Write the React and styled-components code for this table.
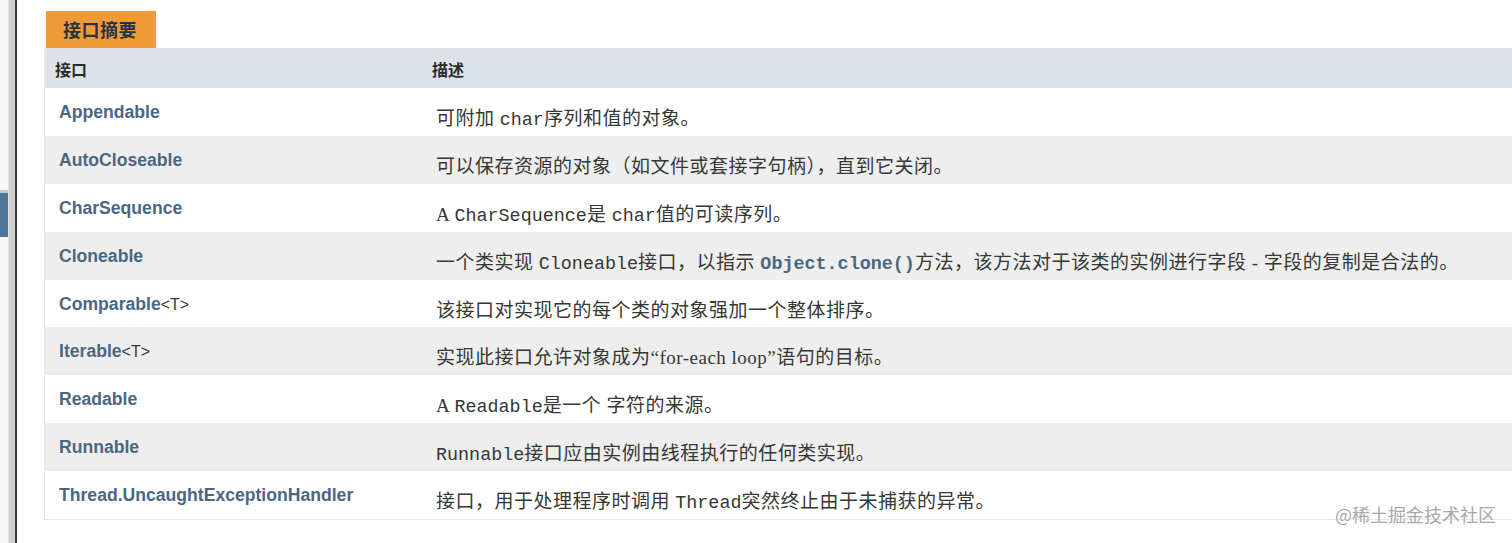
import React from "react";
import styled, { createGlobalStyle } from "styled-components";

const GlobalStyle = createGlobalStyle`
  html, body {
    margin: 0;
    padding: 0;
    background: #ffffff;
  }
  body {
    font-family: "Liberation Sans", Arial, "Noto Sans CJK SC", sans-serif;
    color: #353833;
  }
`;

const Page = styled.div`
  position: relative;
  display: flex;
  height: 543px;
  overflow: hidden;
  background: #fff;
`;

// the window edge on the left of the screenshot
const Edge = styled.div`
  display: flex;
  flex: none;
  width: 17px;
`;

const EdgeStrip = styled.div`
  width: 8px;
  padding-top: 190px;
  background: #f7f7f7;
`;

const BlueTab = styled.div`
  height: 44px;
  border-top: 3px solid #c9c9c9;
  background: #4e7699;
`;

const Gutter = styled.div`
  width: 6px;
  background: #cfcfcf;
  border-left: 1px solid #e2e2e2;
`;

const EdgeLine = styled.div`
  width: 2px;
  background: #3a3a3a;
`;

const Main = styled.div`
  flex: 1;
  min-width: 0;
  padding: 11px 0 0 27px;
`;

const Caption = styled.div`
  display: inline-block;
  height: 37px;
  line-height: 37px;
  margin-left: 2px;
  padding: 0 19px 0 17px;
  background: #f19a38;
  color: #253441;
  font-size: 18px;
  font-weight: 700;
  letter-spacing: 0.5px;
  font-family: "Noto Sans CJK SC", sans-serif;
`;

const Table = styled.table`
  width: 100%;
  border-collapse: collapse;
  border-left: 1px solid #e8e8e8;
  border-bottom: 1px solid #e6e6e6;
  border-top: 1px solid #e4e4e4;
`;

const HeadCell = styled.th`
  height: 39px;
  padding: 0 0 0 ${(p) => p.$pad}px;
  width: ${(p) => p.$w || "auto"};
  text-align: left;
  background: #dee3e9;
  color: #2b2b2b;
  font-size: 16px;
  font-weight: 700;
  font-family: "Noto Sans CJK SC", sans-serif;
`;

const Row = styled.tr`
  height: 47.9px;
  background: ${(p) => (p.$alt ? "#eeeeef" : "#ffffff")};
`;

const NameCell = styled.td`
  vertical-align: top;
  padding: 14px 0 0 14px;
`;

const Name = styled.a`
  color: #4a6782;
  font-weight: 700;
  font-size: 17.6px;
  font-family: "Liberation Sans", Arial, sans-serif;
  text-decoration: none;
`;

const TypeParam = styled.span`
  color: #353833;
  font-weight: 400;
`;

const DescCell = styled.td`
  vertical-align: top;
  padding: 15px 0 0 4px;
  color: #353833;
  font-size: 19px;
  letter-spacing: 0.5px;
  font-family: "Liberation Serif", "Noto Sans CJK SC", serif;
  white-space: nowrap;
`;

const Code = styled.code`
  font-family: "Liberation Mono", "Courier New", monospace;
  font-size: 18.4px;
  letter-spacing: 0;
  color: #353833;
`;

const CodeLink = styled(Code)`
  font-weight: 700;
  color: #4a6782;
`;

const Watermark = styled.div`
  position: absolute;
  right: 16px;
  bottom: 16px;
  color: #a8a8a8;
  font-size: 18px;
  font-family: "Noto Sans CJK SC", sans-serif;
  text-shadow: 0 0 2px #fff;
`;

const rows = [
  { name: "Appendable", desc: <>可附加 <Code>char</Code>序列和值的对象。</> },
  { name: "AutoCloseable", desc: <>可以保存资源的对象（如文件或套接字句柄），直到它关闭。</> },
  { name: "CharSequence", desc: <>A <Code>CharSequence</Code>是 <Code>char</Code>值的可读序列。</> },
  {
    name: "Cloneable",
    desc: (
      <>
        一个类实现 <Code>Cloneable</Code>接口，以指示 <CodeLink>Object.clone()</CodeLink>方法，该方法对于该类的实例进行字段 - 字段的复制是合法的。
      </>
    ),
  },
  { name: "Comparable", param: "<T>", desc: <>该接口对实现它的每个类的对象强加一个整体排序。</> },
  { name: "Iterable", param: "<T>", desc: <>实现此接口允许对象成为“for-each loop”语句的目标。</> },
  { name: "Readable", desc: <>A <Code>Readable</Code>是一个 字符的来源。</> },
  { name: "Runnable", desc: <><Code>Runnable</Code>接口应由实例由线程执行的任何类实现。</> },
  {
    name: "Thread.UncaughtExceptionHandler",
    desc: <>接口，用于处理程序时调用 <Code>Thread</Code>突然终止由于未捕获的异常。</>,
  },
];

const App = () => {
  return (
    <>
      <GlobalStyle />
      <Page>
        <Edge>
          <EdgeStrip>
            <BlueTab />
          </EdgeStrip>
          <Gutter />
          <EdgeLine />
        </Edge>
        <Main>
          <Caption>接口摘要</Caption>
          <Table>
            <thead>
              <tr>
                <HeadCell $pad={10} $w="377px">接口</HeadCell>
                <HeadCell $pad={0}>描述</HeadCell>
              </tr>
            </thead>
            <tbody>
              {rows.map((r, i) => (
                <Row key={r.name} $alt={i % 2 === 1}>
                  <NameCell>
                    <Name href="#">{r.name}</Name>
                    {r.param && <TypeParam>{r.param}</TypeParam>}
                  </NameCell>
                  <DescCell>{r.desc}</DescCell>
                </Row>
              ))}
            </tbody>
          </Table>
        </Main>
        <Watermark>@稀土掘金技术社区</Watermark>
      </Page>
    </>
  );
};

export default App;
